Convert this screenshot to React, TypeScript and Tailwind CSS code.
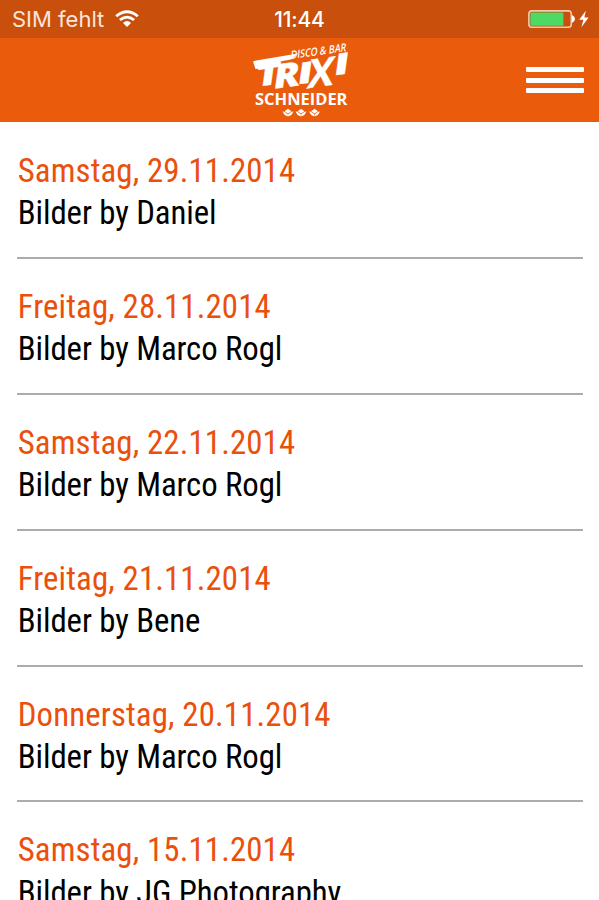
import React from "react";

interface Gallery {
  date: string;
  title: string;
}

const galleries: Gallery[] = [
  { date: "Samstag, 29.11.2014", title: "Bilder by Daniel" },
  { date: "Freitag, 28.11.2014", title: "Bilder by Marco Rogl" },
  { date: "Samstag, 22.11.2014", title: "Bilder by Marco Rogl" },
  { date: "Freitag, 21.11.2014", title: "Bilder by Bene" },
  { date: "Donnerstag, 20.11.2014", title: "Bilder by Marco Rogl" },
  { date: "Samstag, 15.11.2014", title: "Bilder by JG Photography" },
];

const WifiIcon = () => (
  <svg width="24" height="18" viewBox="0 0 24 18" fill="none" stroke="#fff" strokeWidth="2.7">
    <path d="M1.2 6.3 Q12 -2.8 22.8 6.3" />
    <path d="M4.9 10.1 Q12 4 19.1 10.1" />
    <path d="M8 13 Q12 9.2 16 13 L12 17 Z" fill="#fff" stroke="none" />
  </svg>
);

const BatteryIcon = () => (
  <svg width="62" height="20" viewBox="0 0 62 20">
    <rect x="0.9" y="1.9" width="42.4" height="16.4" rx="3" fill="none" stroke="#f6c9b0" strokeWidth="1.6" />
    <rect x="2.4" y="3.4" width="33" height="13.4" rx="1" fill="#4cd964" />
    <path d="M44 6 Q47 7.5 47 10 Q47 12.5 44 14 Z" fill="#fff" />
    <path d="M57.8 1.8 L51.2 10.8 L55.4 10.8 L53.4 18.2 L60.6 8.6 L56.4 8.6 Z" fill="#fff" />
  </svg>
);

const Leaf = ({ x }: { x: number }) => (
  <g transform={`translate(${x} 71.6)`} fill="#fff">
    <path d="M0 -3.8 L3.4 -1.4 L0 0.9 L-3.4 -1.4 Z" />
    <path d="M-5.4 -1 L-3.6 -0.9 L-0.2 1.6 L-0.2 4 L-3.4 2.4 Z" />
    <path d="M5.4 -1 L3.6 -0.9 L0.2 1.6 L0.2 4 L3.4 2.4 Z" />
  </g>
);

const Logo = () => (
  <svg width="100" height="80" viewBox="0 0 100 80" fill="#fff" className="overflow-visible font-['Open_Sans',sans-serif]">
    <text transform="translate(41.5 18) rotate(-8) skewX(-14)" fontSize="11" fontWeight="600" textLength="56" lengthAdjust="spacingAndGlyphs">
      DISCO &amp; BAR
    </text>
    {/* wordmark: every letter steps along a rising baseline */}
    <g fontWeight="800" stroke="#fff" strokeWidth="0.4">
      <path d="M7 19.5 L49 12.5 L42 18.5 L31 20.5 L30 25 L6.5 28 L4 20.5 Z" stroke="none" />
      <text transform="translate(6 46) rotate(-8) skewX(-16)" fontSize="30" textLength="24" lengthAdjust="spacingAndGlyphs">T</text>
      <text transform="translate(23.5 48) rotate(-8) skewX(-16)" fontSize="33" textLength="26" lengthAdjust="spacingAndGlyphs">R</text>
      <text transform="translate(47.5 43.5) rotate(-8) skewX(-16)" fontSize="29" textLength="15" lengthAdjust="spacingAndGlyphs">I</text>
      <text transform="translate(57.5 47.5) rotate(-8) skewX(-16)" fontSize="39" fontWeight="700" textLength="26" lengthAdjust="spacingAndGlyphs">X</text>
      <text transform="translate(84 34.5) rotate(-8) skewX(-16)" fontSize="29" textLength="15" lengthAdjust="spacingAndGlyphs">I</text>
    </g>
    <text x="6" y="64" fontSize="16.5" fontWeight="700" textLength="92.5" lengthAdjust="spacingAndGlyphs">
      SCHNEIDER
    </text>
    <Leaf x={39} />
    <Leaf x={52} />
    <Leaf x={65.5} />
  </svg>
);

const StatusBar = () => (
  <div className="grid h-[38px] grid-cols-3 items-center bg-[#c94f0c] font-[Inter,sans-serif] text-[22px] text-white">
    <div className="flex items-center gap-[11px] pl-3">
      <span className="pt-px whitespace-nowrap text-[#fbe5da]">SIM fehlt</span>
      <WifiIcon />
    </div>
    <span className="pt-px text-center text-[21px] font-medium tracking-[-0.2px]">11:44</span>
    <div className="flex justify-end pr-[9px]">
      <BatteryIcon />
    </div>
  </div>
);

const Header = () => (
  <header className="grid h-[84px] grid-cols-3 bg-[#ea5b0c]">
    <div />
    <div className="flex justify-center pt-[3px]">
      <Logo />
    </div>
    <button className="mt-[29px] mr-[15px] flex h-[26px] flex-col justify-between justify-self-end" aria-label="Menü">
      <span className="h-[5px] w-[58px] rounded-[1px] bg-white" />
      <span className="h-[5px] w-[58px] rounded-[1px] bg-white" />
      <span className="h-[5px] w-[58px] rounded-[1px] bg-white" />
    </button>
  </header>
);

const GalleryRow = ({ gallery }: { gallery: Gallery }) => (
  <li className="h-[135.9px] border-b-2 border-[#acacac] pt-[27px] pl-[0.7px] text-[32.8px] leading-[42.2px] whitespace-nowrap">
    <p className="tracking-[0.15px] text-[#ea500c]">{gallery.date}</p>
    <p className="tracking-[-0.08px] text-black">{gallery.title}</p>
  </li>
);

export default function App() {
  return (
    <div className="h-[900px] w-[599px] overflow-hidden bg-white">
      <StatusBar />
      <Header />
      <ul className="pt-[1px] pr-4 pl-[17px] font-['Roboto_Condensed',Roboto,sans-serif] font-stretch-condensed">
        {galleries.map((gallery) => (
          <GalleryRow key={gallery.date} gallery={gallery} />
        ))}
      </ul>
    </div>
  );
}
